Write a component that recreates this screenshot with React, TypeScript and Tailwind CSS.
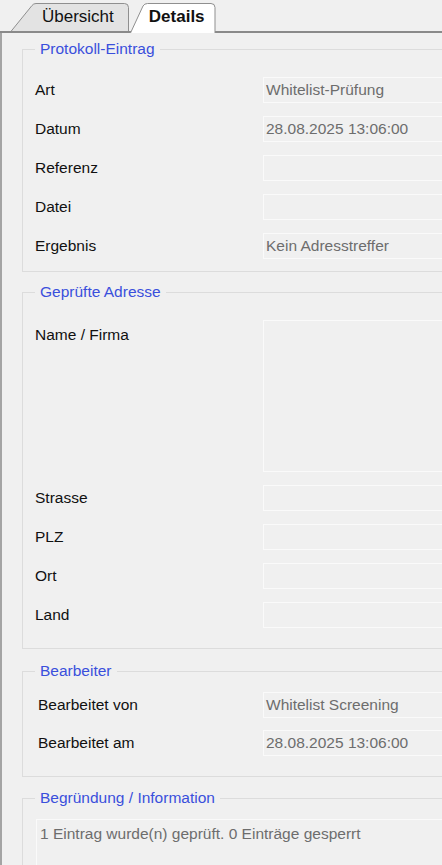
import React from "react";

type RowProps = { label: string; value?: string; labelClass?: string };

function Field({ value = "", className = "" }: { value?: string; className?: string }) {
    return (
        <div className={"h-[26px] w-[200px] shrink-0 border border-[#fafafa] bg-[#f0f0f0] pl-[2px] leading-[24px] text-[#6d6d6d] whitespace-nowrap " + className}>
            {value}
        </div>
    );
}

function Row({ label, value, labelClass = "pl-[12px]" }: RowProps) {
    return (
        <div className="flex items-center">
            <div className={"w-[240px] shrink-0 text-[#111] " + labelClass}>{label}</div>
            <Field value={value} />
        </div>
    );
}

function Group({ title, className = "", children }: { title: string; className?: string; children: React.ReactNode }) {
    return (
        <fieldset className={"w-[460px] min-w-0 border border-[#dcdcdc] " + className}>
            <legend className="ml-[12px] px-[5px] leading-[18px] text-[#3a4fdc]">{title}</legend>
            {children}
        </fieldset>
    );
}

function TabStrip() {
    return (
        <div className="relative h-[33px]">
            <svg className="absolute inset-0" width="442" height="33" viewBox="0 0 442 33">
                <path d="M10.5 32 L32 5.5 Q33.5 3.5 36 3.5 L124.5 3.5 Q128.5 3.5 128.5 7.5 L128.5 32" fill="#e3e3e3" stroke="#8f8f8f" />
                <line x1="0" y1="32" x2="131" y2="32" stroke="#8a8a8a" strokeWidth="2" />
                <line x1="214" y1="32" x2="442" y2="32" stroke="#8a8a8a" strokeWidth="2" />
                <path d="M130.5 33 L143 6 Q144.5 3.5 147.5 3.5 L211 3.5 Q215 3.5 215 7.5 L215 33" fill="#ffffff" stroke="#8f8f8f" />
            </svg>
            <div className="relative flex h-[31px] items-center pt-[2px] text-[17px]">
                <span className="ml-[42px] text-[#111]">Übersicht</span>
                <span className="ml-[35px] font-bold text-[#111]">Details</span>
            </div>
        </div>
    );
}

export default function App() {
    return (
        <div className="h-[865px] w-[442px] overflow-hidden bg-[#f0f0f0] font-['Liberation_Sans',Arial,sans-serif] text-[15.5px]">
            <TabStrip />
            <div className="h-[832px] border-l-2 border-[#a4a4a4] pl-[20px] pt-[7px]">
                <Group title="Protokoll-Eintrag" className="pb-[12px]">
                    <div className="flex flex-col gap-[13px] pt-[19px]">
                        <Row label="Art" value="Whitelist-Prüfung" />
                        <Row label="Datum" value="28.08.2025 13:06:00" />
                        <Row label="Referenz" />
                        <Row label="Datei" />
                        <Row label="Ergebnis" value="Kein Adresstreffer" />
                    </div>
                </Group>

                <Group title="Geprüfte Adresse" className="mt-[11px] pb-[20px]">
                    <div className="flex flex-col gap-[13px] pt-[19px]">
                        <div className="flex items-start">
                            <div className="mt-[3px] w-[240px] shrink-0 pl-[12px] text-[#111]">Name / Firma</div>
                            <Field className="h-[152px]" />
                        </div>
                        <Row label="Strasse" />
                        <Row label="PLZ" />
                        <Row label="Ort" />
                        <Row label="Land" />
                    </div>
                </Group>

                <Group title="Bearbeiter" className="mt-[13px] pb-[20px]">
                    <div className="flex flex-col gap-[12px] pt-[12px]">
                        <Row label="Bearbeitet von" value="Whitelist Screening" labelClass="pl-[15px]" />
                        <Row label="Bearbeitet am" value="28.08.2025 13:06:00" labelClass="pl-[15px]" />
                    </div>
                </Group>

                <Group title="Begründung / Information" className="mt-[12px] h-[120px]">
                    <div className="pt-[12px] pl-[13px]">
                        <div className="h-[70px] w-[430px] border border-[#fafafa] pl-[3px] pt-[2px] leading-[24px] text-[#6d6d6d]">
                            1 Eintrag wurde(n) geprüft. 0 Einträge gesperrt
                        </div>
                    </div>
                </Group>
            </div>
        </div>
    );
}
